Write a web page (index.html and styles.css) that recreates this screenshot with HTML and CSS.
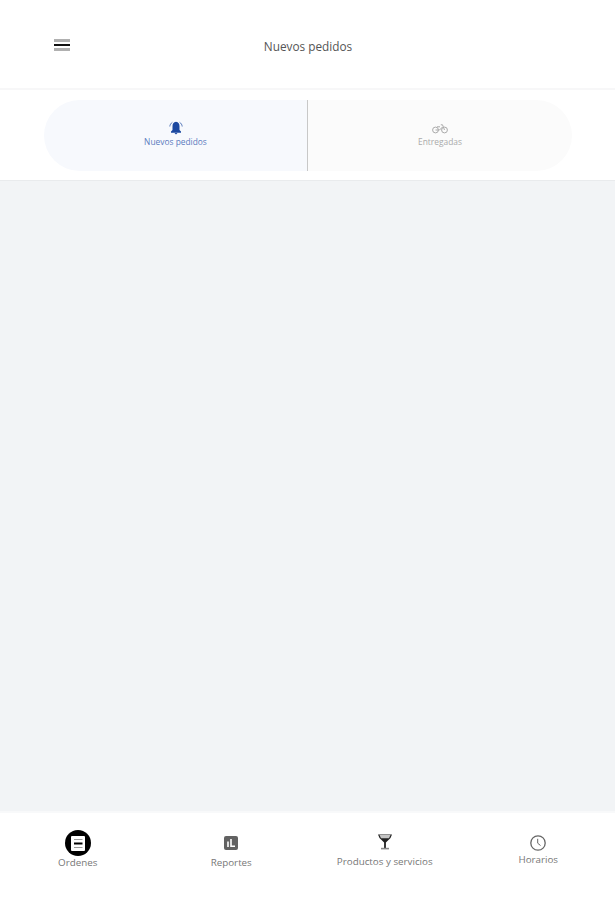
FILE: index.html
```html
<!DOCTYPE html>
<html lang="es">

<head>
    <meta charset="UTF-8">
    <meta name="viewport" content="width=device-width, initial-scale=1.0">
    <title>Nuevos pedidos</title>
    <link rel="stylesheet" href="styles.css">
</head>

<body>
    <header class="header">
        <button class="menu" aria-label="Menú">
            <span></span>
            <span class="dark"></span>
            <span></span>
        </button>
        <h1 class="title">Nuevos pedidos</h1>
    </header>

    <!-- pestañas -->
    <div class="tabs">
        <a class="tab active">
            <svg width="14" height="14" viewBox="0 0 14 14" fill="none" stroke="currentColor">
                <path d="M7 .8C4.500 1.300 3.500 3 3.500 5.200V9L2 10.500V11.800H12V10.500L10.500 9V5.200C10.500 3 9.500 1.300 7 .8Z" fill="currentColor" stroke="none" />
                <path d="M5.500 12H8.500L7 13.600Z" fill="currentColor" stroke="none" />
                <path d="M3.400 1.300C1.800 2.300 1 3.600 .8 5.500M10.600 1.300C12.200 2.300 13 3.600 13.200 5.500" stroke-opacity=".7" />
            </svg>
            <span>Nuevos pedidos</span>
        </a>
        <a class="tab">
            <svg width="16" height="10" viewBox="0 0 16 10" fill="none" stroke="currentColor">
                <circle cx="3.500" cy="6" r="2.900" />
                <circle cx="12.500" cy="6" r="2.900" />
                <path d="M3.500 6H7.500L10.500 3M5 2.800H8M8.800 .8H10.500L12.500 6" />
            </svg>
            <span>Entregadas</span>
        </a>
    </div>

    <main class="orders"></main>

    <!-- menu inferior -->
    <nav class="nav">
        <a class="nav-item">
            <svg width="26" height="26" viewBox="0 0 26 26">
                <circle cx="13" cy="13" r="13" fill="#000" />
                <rect x="6" y="6" width="14" height="15" rx="1" fill="#fff" />
                <path d="M9 9.500H17.500M9 17.500H17.500" stroke="#999" />
                <path d="M9 13.500H17.500" stroke="#000" stroke-width="2" />
            </svg>
            <span>Ordenes</span>
        </a>
        <a class="nav-item reportes">
            <svg width="14" height="14" viewBox="0 0 14 14">
                <rect width="14" height="14" rx="2" fill="#626262" />
                <path d="M4 5.500V11M7 3V11M6.500 10.200H11" stroke="#fff" stroke-width="1.600" fill="none" />
            </svg>
            <span>Reportes</span>
        </a>
        <a class="nav-item productos">
            <svg width="14" height="16" viewBox="0 0 14 16">
                <path d="M0 .5H14L12.500 4L7.900 8.500V14H6.100V8.500L1.500 4Z" fill="#222" />
                <path d="M1.500 1H12.500L11 4.200H3Z" fill="#c4c4c4" />
                <path d="M3 14.600H11" stroke="#888" stroke-width="1.600" />
            </svg>
            <span>Productos y servicios</span>
        </a>
        <a class="nav-item horarios">
            <svg width="16" height="16" viewBox="0 0 16 16" fill="none" stroke="#666">
                <circle cx="8" cy="8" r="7.200" stroke-width="1.300" />
                <path d="M7.700 3.800V8.200L10.500 10.500" />
            </svg>
            <span>Horarios</span>
        </a>
    </nav>
</body>

</html>
```

FILE: styles.css
```css
* {
    box-sizing: border-box;
}

body {
    margin: 0;
    height: 900px;
    display: flex;
    flex-direction: column;
    background: #fff;
    font-family: "Open Sans", "Noto Sans", sans-serif;
}

.header {
    height: 90px;
    padding: 0 53px 0 54px;
    display: grid;
    grid-template-columns: 16px 1fr 16px;
    align-items: center;
    border-bottom: 2px solid #f7f7f8;
}

.menu {
    display: flex;
    flex-direction: column;
    gap: 2px;
    width: 16px;
    margin-top: 2px;
    padding: 0;
    border: 0;
    background: none;
}

.menu span {
    height: 3px;
    background: #b0b0b0;
}

.menu .dark {
    height: 2px;
    background: #111;
}

.title {
    margin: 4px 0 0;
    font-size: 11.800px;
    font-weight: 400;
    line-height: 16px;
    text-align: center;
    color: #555;
}

/* pestañas */

.tabs {
    display: grid;
    grid-template-columns: 264px 1fr;
    height: 91px;
    padding: 10px 43px 9px 44px;
    border-bottom: 1px solid #e9ebed;
}

.tab {
    display: flex;
    flex-direction: column;
    align-items: center;
    justify-content: center;
    gap: 2px;
    background: #fbfbfb;
    border-radius: 0 36px 36px 0;
    color: #aaa;
    font-size: 8.400px;
    line-height: 12px;
}

.tab.active {
    gap: 1px;
    padding-bottom: 2px;
    background: #f7f9fd;
    border-right: 1px solid #c8c8c8;
    border-radius: 36px 0 0 36px;
    color: #1b48a0;
}

.tab.active span {
    color: #5b7bbd;
}

.orders {
    flex: 1;
    background: #f2f4f6;
}

/* menu inferior */

.nav {
    display: grid;
    grid-template-columns: repeat(4, 1fr);
    height: 89px;
    padding-left: 1px;
    border-top: 2px solid #f8f9fa;
}

.nav-item {
    display: flex;
    flex-direction: column;
    align-items: center;
    padding-top: 17px;
    color: #777;
    font-size: 9.800px;
    line-height: 14px;
}

.reportes {
    padding-top: 23px;
}

.reportes span {
    margin-top: 6px;
}

.productos {
    padding-top: 21px;
}

.productos span {
    margin-top: 5px;
}

.horarios {
    padding-top: 22px;
}

.horarios span {
    margin-top: 2px;
}
```
